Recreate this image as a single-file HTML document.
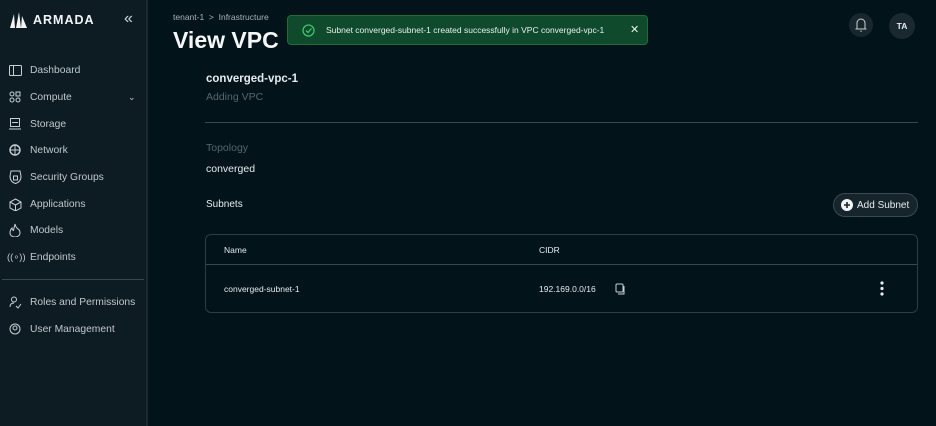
<!DOCTYPE html>
<html><head><meta charset="utf-8"><style>
*{box-sizing:border-box;margin:0;padding:0}
body{width:936px;height:426px;overflow:hidden;background:#02131a;font-family:"Liberation Sans",sans-serif;color:#e6ecef;position:relative}
.sb{position:absolute;left:0;top:0;width:148px;height:426px;background:#0d1c23;border-right:2px solid #1b2a31}
.logo{position:absolute;left:8px;top:12px;display:flex;align-items:center;gap:5px;font-weight:bold;font-size:12.5px;letter-spacing:1px;color:#f2f4f5}
.col{position:absolute;left:124px;top:10px;font-size:16px;color:#cfd6da}
.nav{position:absolute;left:0;width:148px;display:flex;align-items:center;font-size:10.3px;color:#bfc8cc;height:20px}
.nav svg{position:absolute;left:9px}
.nav span{position:absolute;left:30px}
.hr{position:absolute;left:2px;width:142px;height:1px;background:#3a474d;top:279px}
.bc{position:absolute;left:173px;top:12px;font-size:8.5px;color:#aab3b8}
h1{position:absolute;left:173px;top:27px;font-size:23px;font-weight:bold;color:#f4f6f7}
.toast{position:absolute;left:287px;top:15px;width:361px;height:30px;background:#0e4a2b;border:1px solid #1e6b3e;border-radius:4px;font-size:8.5px;color:#e6f3ea}
.bell{position:absolute;left:849px;top:13px;width:24px;height:24px;border-radius:50%;background:#18272e}
.av{position:absolute;left:889px;top:13px;width:26px;height:26px;border-radius:50%;background:#1a2930;font-size:8.5px;font-weight:bold;text-align:center;line-height:26px}
.t{position:absolute;font-size:10.5px}
.g{color:#58666c}
.line{position:absolute;left:205px;top:122px;width:713px;height:1px;background:#3a474d}
.btn{position:absolute;left:833px;top:193px;width:85px;height:24px;border:1px solid #3c4a50;border-radius:12px;background:#16242b;font-size:10px}
.tbl{position:absolute;left:205px;top:234px;width:713px;height:79px;border:1px solid #2f3c42;border-radius:6px}
.tbl .hl{position:absolute;left:0;right:0;top:29px;height:1px;background:#3a474d}
</style></head><body>
<div class="sb">
 <div class="logo"><svg width="20" height="16" viewBox="0 0 20 16"><path d="M2 16 L6 2 L7 16Z M8 16 L11 0 L13 16Z M13 16 L14 4 L19 16Z" fill="#f2f4f5"/></svg>ARMADA</div>
 <div class="col">«</div>
 <div class="nav" style="top:60px"><svg width="13" height="11"><rect x=".5" y=".5" width="12" height="10" rx="1" fill="none" stroke="#c8d0d4"/><line x1="4.5" y1="1" x2="4.5" y2="10" stroke="#c8d0d4"/></svg><span>Dashboard</span></div>
 <div class="nav" style="top:87px"><svg width="12" height="12"><circle cx="3" cy="3" r="2" fill="none" stroke="#c8d0d4"/><circle cx="9" cy="9" r="2" fill="none" stroke="#c8d0d4"/><circle cx="3" cy="9" r="2" fill="none" stroke="#c8d0d4"/><rect x="7" y="1" width="4" height="4" fill="none" stroke="#c8d0d4"/></svg><span>Compute</span><span style="left:128px;font-size:9px">⌄</span></div>
 <div class="nav" style="top:114px"><svg width="12" height="12"><rect x="1.5" y=".5" width="9" height="8" fill="none" stroke="#c8d0d4"/><line x1="0" y1="11" x2="12" y2="11" stroke="#c8d0d4"/><line x1="3" y1="4.5" x2="9" y2="4.5" stroke="#c8d0d4"/></svg><span>Storage</span></div>
 <div class="nav" style="top:140px"><svg width="12" height="12"><circle cx="6" cy="6" r="5" fill="none" stroke="#c8d0d4" stroke-width="1.4"/><path d="M1 6h10M6 1v10" stroke="#c8d0d4"/></svg><span>Network</span></div>
 <div class="nav" style="top:167px"><svg width="13" height="14"><path d="M2 1h9l1 5q0 6-5.5 7.5Q1 12 1 6z" fill="none" stroke="#c8d0d4"/><rect x="4.5" y="6" width="4" height="4" fill="none" stroke="#c8d0d4"/></svg><span>Security Groups</span></div>
 <div class="nav" style="top:194px"><svg width="13" height="13"><path d="M6.5 1l5.5 3v6l-5.5 3-5.5-3V4zM1 4l5.5 3 5.5-3M6.5 7v6" fill="none" stroke="#c8d0d4"/></svg><span>Applications</span></div>
 <div class="nav" style="top:220px"><svg width="12" height="14"><path d="M6 1q1 4 3 5t2 4a5 4 0 0 1-10 0q0-3 2-5 0 2 1.5 2.5Q5 5 6 1z" fill="none" stroke="#c8d0d4"/></svg><span>Models</span></div>
 <div class="nav" style="top:247px"><span style="left:7px;font-size:9.5px">((∘))</span><span>Endpoints</span></div>
 <div class="hr"></div>
 <div class="nav" style="top:292px"><svg width="13" height="13"><circle cx="5" cy="3.5" r="2.5" fill="none" stroke="#c8d0d4"/><path d="M1 11q0-4 4-4M7 10l2 2 3-4" fill="none" stroke="#c8d0d4"/></svg><span>Roles and Permissions</span></div>
 <div class="nav" style="top:319px"><svg width="12" height="12"><circle cx="6" cy="6" r="5" fill="none" stroke="#c8d0d4"/><circle cx="6" cy="5" r="2" fill="none" stroke="#c8d0d4"/></svg><span>User Management</span></div>
</div>
<div class="bc">tenant-1 &nbsp;&gt;&nbsp; Infrastructure</div>
<h1>View VPC</h1>
<div class="toast"><svg style="position:absolute;left:14px;top:8px" width="13" height="13"><circle cx="6.5" cy="6.5" r="5.5" fill="none" stroke="#3fc46a" stroke-width="1.3"/><path d="M4 6.5l2 2 3.5-4" fill="none" stroke="#3fc46a" stroke-width="1.3"/></svg><span style="position:absolute;left:38px;top:9px">Subnet converged-subnet-1 created successfully in VPC converged-vpc-1</span><span style="position:absolute;left:342px;top:7px;font-size:11px">✕</span></div>
<div class="bell"><svg style="position:absolute;left:6px;top:4px" width="12" height="16"><path d="M2 12V6a4 4 0 0 1 8 0v6zM0.5 12h11M6 13.5v1.5" fill="none" stroke="#c8d0d4"/></svg></div>
<div class="av">TA</div>
<div class="t" style="left:206px;top:73px;font-weight:bold;font-size:11.5px">converged-vpc-1</div>
<div class="t g" style="left:206px;top:91px">Adding VPC</div>
<div class="line"></div>
<div class="t g" style="left:206px;top:142px">Topology</div>
<div class="t" style="left:206px;top:163px">converged</div>
<div class="t" style="left:206px;top:199px;font-size:10px">Subnets</div>
<div class="btn"><svg style="position:absolute;left:7px;top:5px" width="12" height="12"><circle cx="6" cy="6" r="6" fill="#f2f4f5"/><path d="M6 3v6M3 6h6" stroke="#16242b" stroke-width="1.6"/></svg><span style="position:absolute;left:23px;top:6px">Add Subnet</span></div>
<div class="tbl"><div class="hl"></div>
 <span class="t" style="left:18px;top:10px;font-size:8.5px">Name</span>
 <span class="t" style="left:333px;top:10px;font-size:8.5px">CIDR</span>
 <span class="t" style="left:18px;top:49px;font-size:8.5px">converged-subnet-1</span>
 <span class="t" style="left:333px;top:49px;font-size:8.5px">192.169.0.0/16</span>
 <svg style="position:absolute;left:409px;top:48px" width="11" height="12"><rect x="1" y="1" width="7" height="8" rx="1" fill="none" stroke="#c8d0d4"/><path d="M3 11h6V3" fill="none" stroke="#c8d0d4"/></svg>
 <svg style="position:absolute;left:674px;top:46px" width="4" height="15"><circle cx="2" cy="2" r="1.6" fill="#e6ecef"/><circle cx="2" cy="7.5" r="1.6" fill="#e6ecef"/><circle cx="2" cy="13" r="1.6" fill="#e6ecef"/></svg>
</div>
</body></html>
